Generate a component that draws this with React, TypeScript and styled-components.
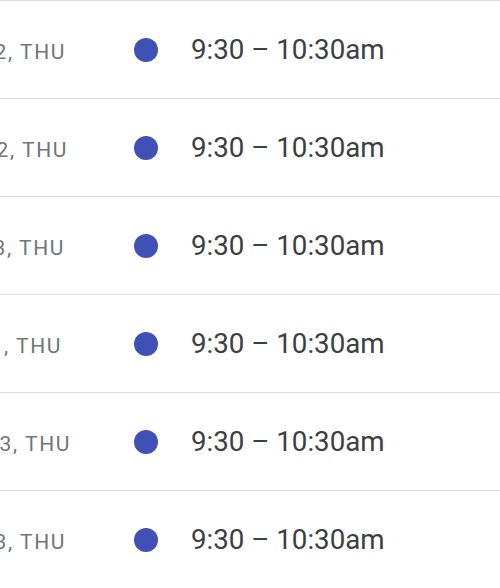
import React from "react";
import styled, { createGlobalStyle } from "styled-components";

const Global = createGlobalStyle`
  html, body { margin: 0; padding: 0; background: #ffffff; overflow: hidden; }
  body { font-family: Roboto, "Noto Sans", Arial, sans-serif; }
`;

const List = styled.div`
  width: 500px;
  border-top: 1px solid #dadce0;
`;

const Row = styled.div`
  display: flex;
  align-items: center;
  height: 97px;
  border-bottom: 1px solid #dadce0;
`;

const DateCol = styled.div<{ $end: number }>`
  flex: 0 0 134px;
  width: 134px;
  box-sizing: border-box;
  display: flex;
  justify-content: flex-end;
  padding-right: ${(p) => 134 - p.$end}px;
  padding-top: 5px;
  white-space: nowrap;
  font-size: 21px;
  letter-spacing: 1.6px;
  color: #70757a;
  font-weight: 400;
`;

const Dot = styled.span`
  flex: 0 0 24px;
  width: 24px;
  height: 24px;
  border-radius: 50%;
  background: #3f51b5;
  margin-right: 33px;
`;

const Time = styled.div`
  font-size: 27.7px;
  color: #3c4043;
  white-space: nowrap;
`;

const rows = [
  { date: "MAY 12, THU", end: 66 },
  { date: "MAY 12, THU", end: 68 },
  { date: "MAY 13, THU", end: 65 },
  { date: "MAY 1, THU", end: 62 },
  { date: "MAY 23, THU", end: 71 },
  { date: "MAY 13, THU", end: 66 },
];

export default function App() {
  return (
    <>
      <Global />
      <List>
        {rows.map((r, i) => (
          <Row key={i}>
            <DateCol $end={r.end}>{r.date}</DateCol>
            <Dot />
            <Time>9:30 – 10:30am</Time>
          </Row>
        ))}
      </List>
    </>
  );
}
